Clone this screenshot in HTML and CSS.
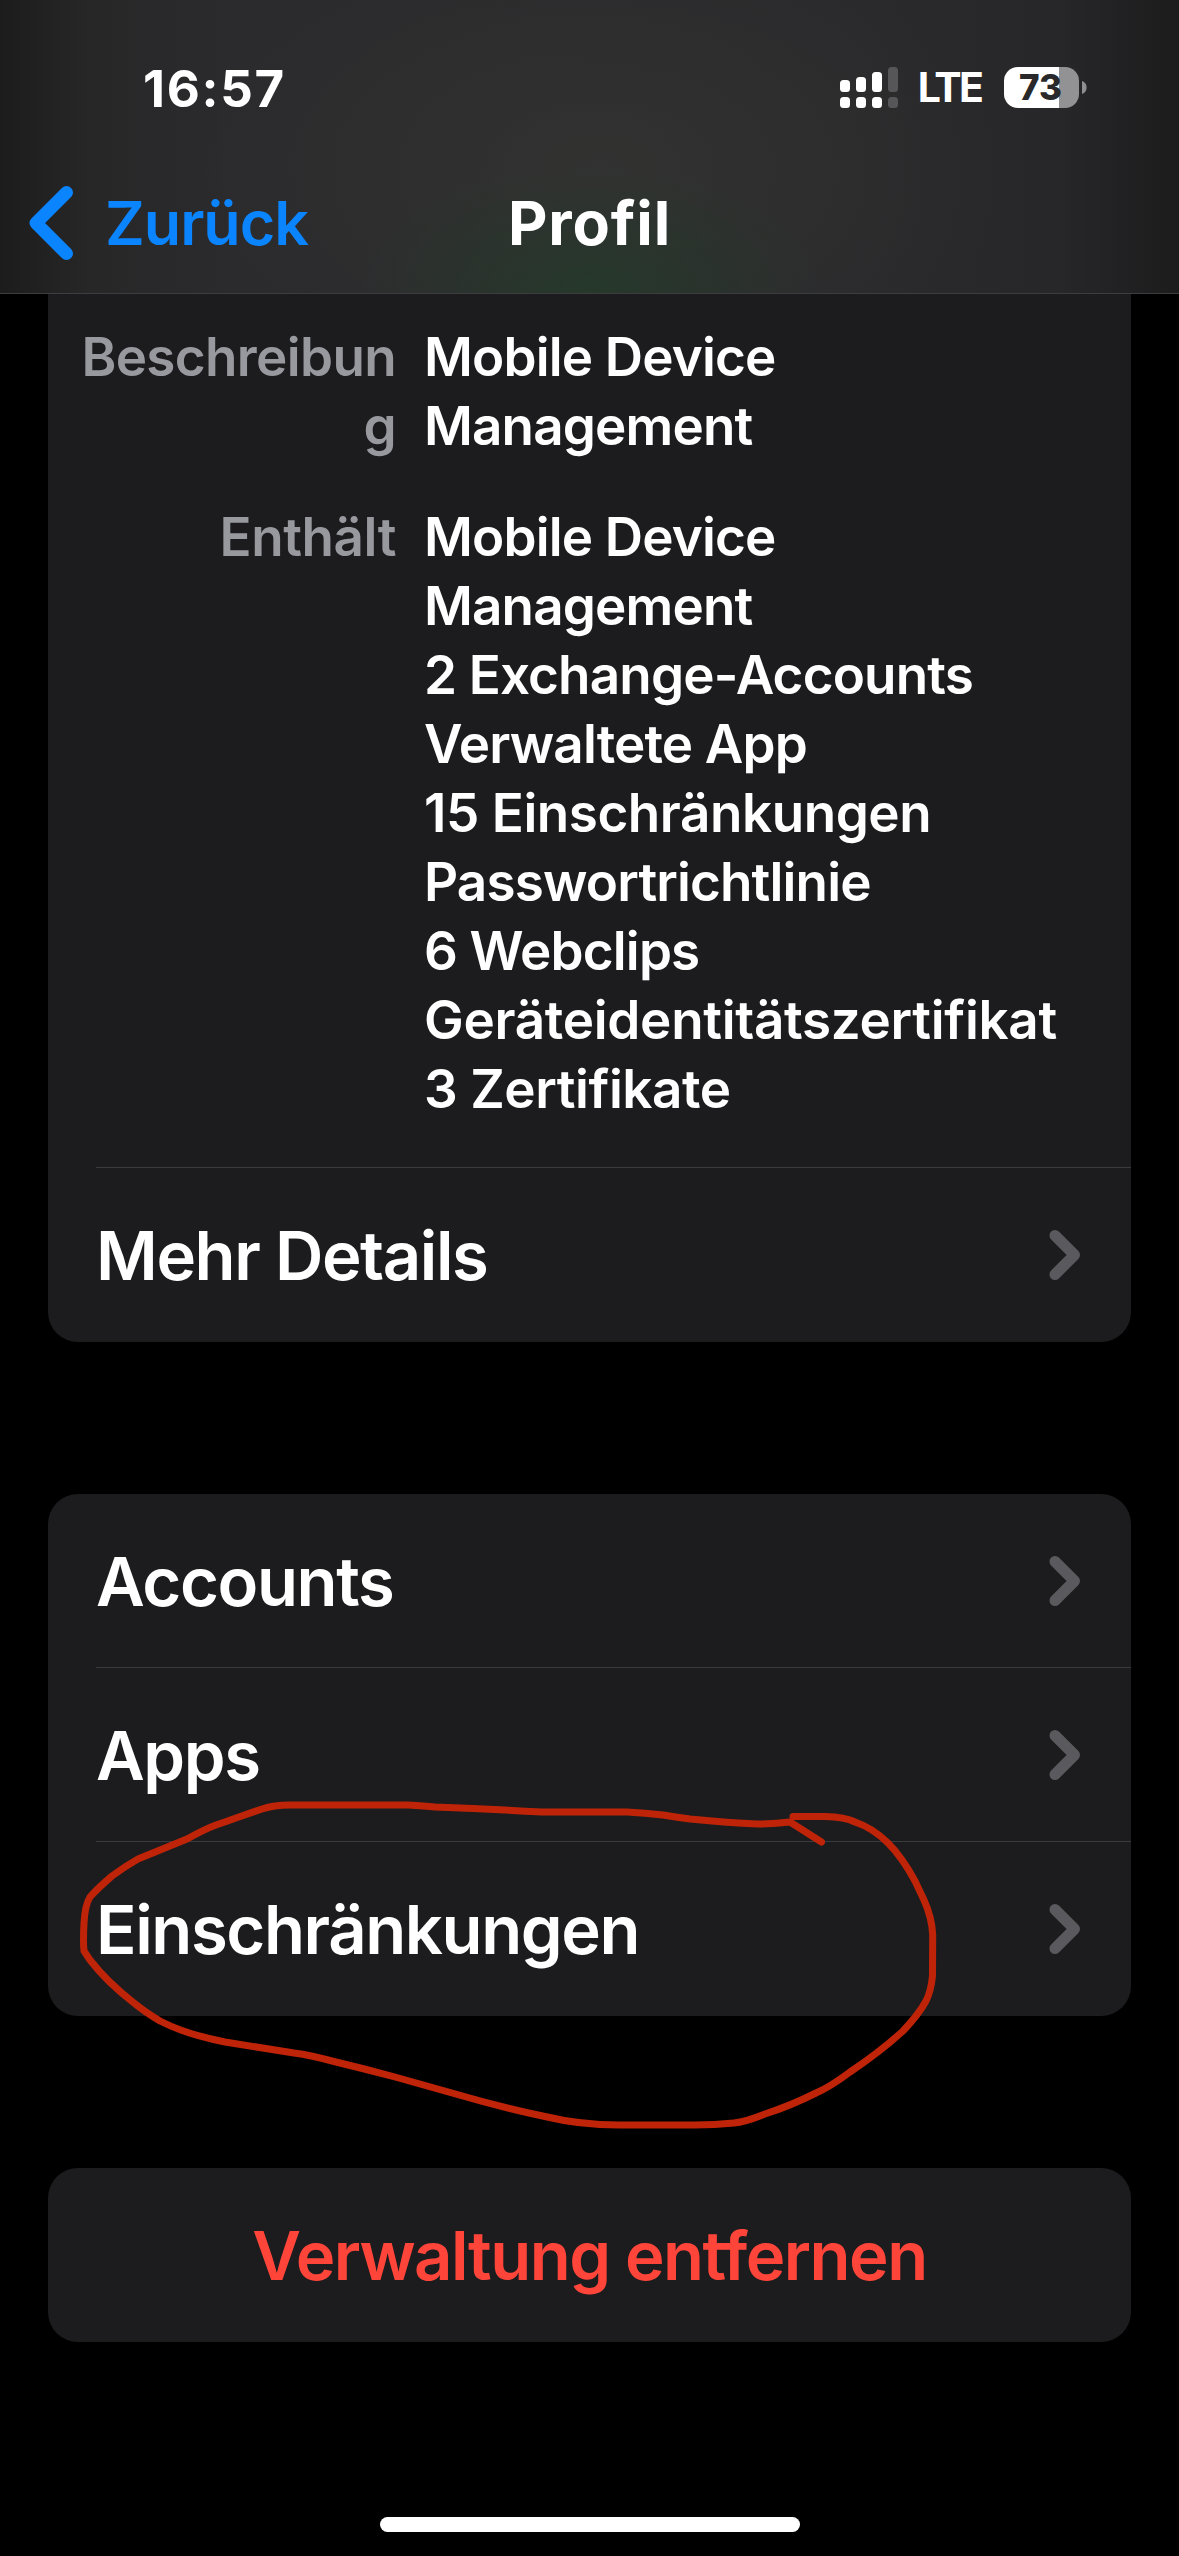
FILE: index.html
```html
<!DOCTYPE html>
<html lang="de">
<head>
<meta charset="utf-8">
<title>Profil</title>
<link rel="stylesheet" href="styles.css">
</head>
<body>
<div class="screen">
  <header class="header">
    <div class="status">
      <span class="time">16:57</span>
      <div class="status-right">
        <svg class="signal" width="58" height="41" viewBox="0 0 58 41" fill="#fff">
          <rect x="0" y="13" width="10" height="12" rx="3.5"/><rect x="0" y="30" width="10" height="11" rx="3.5"/>
          <rect x="16" y="10" width="10" height="15" rx="3.5"/><rect x="16" y="30" width="10" height="11" rx="3.5"/>
          <rect x="32" y="5" width="10" height="20" rx="3.5"/><rect x="32" y="30" width="10" height="11" rx="3.5"/>
          <g fill="#565658"><rect x="48" y="0" width="10" height="25" rx="3.5"/><rect x="48" y="30" width="10" height="11" rx="3.5"/></g>
        </svg>
        <span class="lte">LTE</span>
        <div class="battery"><span class="level">73</span></div>
        <svg class="nub" width="5" height="13" viewBox="0 0 5 13"><path d="M0 0C3 1 4.600 3.500 4.600 6.500S3 12 0 13Z" fill="#8f8f91"/></svg>
      </div>
    </div>
    <nav class="nav">
      <a class="back"><svg width="48" height="78" viewBox="0 0 48 78"><path d="M41.500 8.500L11 39L41.500 69.500" fill="none" stroke="#0b84ff" stroke-width="13" stroke-linecap="round" stroke-linejoin="round"/></svg><span>Zurück</span></a>
      <h1 class="title">Profil</h1>
    </nav>
  </header>

  <main class="content">
    <section class="card first">
      <dl class="details">
        <dt>Beschreibun<br>g</dt>
        <dd>Mobile Device<br>Management</dd>
        <dt class="wide">Enthält</dt>
        <dd>Mobile Device<br>Management<br>2 Exchange-Accounts<br>Verwaltete App<br><span class="wide">15 Einschränkungen</span><br>Passwortrichtlinie<br>6 Webclips<br><span class="long">Geräteidentitätszertifikat</span><br><span class="wide">3 Zertifikate</span></dd>
      </dl>
      <div class="row ruled"><span>Mehr Details</span><svg class="chev" width="32" height="52" viewBox="0 0 32 52"><path d="M6 6.500L25.500 26L6 45.500"/></svg></div>
    </section>

    <section class="card list">
      <div class="row underlined"><span>Accounts</span><svg class="chev" width="32" height="52" viewBox="0 0 32 52"><path d="M6 6.500L25.500 26L6 45.500"/></svg></div>
      <div class="row underlined"><span>Apps</span><svg class="chev" width="32" height="52" viewBox="0 0 32 52"><path d="M6 6.500L25.500 26L6 45.500"/></svg></div>
      <div class="row"><span>Einschränkungen</span><svg class="chev" width="32" height="52" viewBox="0 0 32 52"><path d="M6 6.500L25.500 26L6 45.500"/></svg></div>
    </section>

    <section class="card remove"><span>Verwaltung entfernen</span></section>
  </main>

  <footer class="home"><span class="bar"></span></footer>

  <svg class="scribble" width="900" height="350" viewBox="60 1790 900 350">
    <path d="M793 1816.500L825 1816.500Q845 1817 855 1822Q873 1828 888 1843Q902 1857 915 1881L924 1900Q932 1918 932.700 1935L932.500 1976Q931 1991 926 2001Q919 2014 903 2031Q880 2052 850 2072Q830 2087 816 2093Q790 2106 765 2114Q745 2122 734 2123Q715 2125 694 2125L619 2125Q580 2125 545 2116.500Q500 2107 452 2093Q420 2084 395 2077Q365 2069 336 2062Q310 2055 294 2053L225 2042Q185 2034 160 2021Q145 2012 134 2003Q107 1982 90 1960L84 1951Q83 1943 84 1923Q85 1905 90 1897Q98 1888 112 1876Q124 1867 138 1859L187 1839Q205 1829 216 1825Q228 1821 236 1818L262 1809Q274 1805 290 1805L408 1805Q425 1806 435 1807Q490 1809 542 1812L627 1812Q645 1813 663 1815Q675 1817 690 1819Q730 1823 757 1824Q775 1824 790 1822L821.500 1842"/>
  </svg>
</div>
</body>
</html>
```
FILE: styles.css
```css
* { box-sizing: border-box; }
body { margin: 0; background: #000; }
.screen {
  position: relative;
  width: 1179px;
  height: 2556px;
  overflow: hidden;
  background: #000;
  color: #fff;
  font-family: Inter, "Liberation Sans", sans-serif;
  font-weight: 600;
}
.header {
  height: 294px;
  border-bottom: 1px solid #3d3d3f;
  background:
    radial-gradient(ellipse 230px 130px at 590px 294px, rgba(36, 58, 42, .85), rgba(36, 58, 42, 0)),
    radial-gradient(ellipse 400px 240px at 600px 170px, rgba(54, 54, 52, .65), rgba(54, 54, 52, 0)),
    linear-gradient(90deg, #1c1c1d 0, #272728 90px, #2b2b2d 230px, #2a2a2c 860px, #272729 1060px, #1c1c1d 1179px);
}
.status {
  display: flex;
  justify-content: space-between;
  align-items: center;
  height: 175px;
  padding: 0 92px 0 143px;
}
.time { padding-top: 1px; font-size: 51px; font-weight: 700; letter-spacing: 1.7px; }
.status-right { display: flex; align-items: center; }
.lte { margin: 0 23px 0 20px; font-size: 41px; font-weight: 650; line-height: 41px; letter-spacing: -2.8px; }
.battery {
  width: 75px;
  height: 41px;
  padding-right: 2px;
  border-radius: 14px;
  background: linear-gradient(90deg, #fff 55px, #929294 55px);
  color: #29292b;
  text-align: center;
}
.level { font-size: 35px; font-weight: 800; line-height: 41px; letter-spacing: 0; }
.nub { margin-left: 3px; }
.nav {
  display: grid;
  grid-template-columns: 1fr auto 1fr;
  align-items: center;
  height: 96px;
  padding: 0 25px;
  font-size: 61px;
}
.back { display: flex; align-items: center; gap: 32px; color: #0b84ff; font-weight: 600; letter-spacing: -1px; }
.title { margin: 0; font-size: 61px; font-weight: 700; letter-spacing: 0.8px; }
.content { padding: 0 48px; }
.card { border-radius: 30px; background: #1c1c1e; }
.first { border-radius: 0 0 30px 30px; }
.details {
  display: grid;
  grid-template-columns: 348px 1fr;
  column-gap: 28px;
  row-gap: 42px;
  height: 873px;
  margin: 0;
  padding-top: 29px;
  align-content: start;
  font-size: 53px;
  font-weight: 570;
  line-height: 69px;
  letter-spacing: -0.85px;
}
.details dt { color: #98989f; text-align: right; letter-spacing: -0.65px; }
.details dd { margin: 0; white-space: nowrap; }
.details .long { letter-spacing: -0.3px; }
.details .wide { letter-spacing: -0.45px; }
.row {
  display: flex;
  justify-content: space-between;
  align-items: center;
  height: 174px;
  padding: 0 50px 0 48px;
  font-size: 67px;
  letter-spacing: -1.4px;
}
.ruled, .underlined {
  background: linear-gradient(#3b3b3d, #3b3b3d) 48px 0 / 100% 1px no-repeat;
}
.underlined { background-position: 48px 100%; }
.first .row { height: 175px; }
.first .row span { padding-top: 2px; }
.chev path {
  fill: none;
  stroke: #5a5a5e;
  stroke-width: 11px;
  stroke-linecap: round;
  stroke-linejoin: round;
}
.list { margin-top: 152px; }
.remove {
  display: flex;
  justify-content: center;
  align-items: center;
  height: 174px;
  margin-top: 152px;
  color: #ff453a;
  font-size: 67px;
  letter-spacing: -1.5px;
}
.home { display: flex; justify-content: center; padding-top: 175px; }
.bar { width: 420px; height: 15px; border-radius: 8px; background: #fff; }
.scribble { position: absolute; left: 60px; top: 1790px; }
.scribble path {
  fill: none;
  stroke: #c02408;
  stroke-width: 7px;
  stroke-linecap: round;
  stroke-linejoin: round;
}
```
